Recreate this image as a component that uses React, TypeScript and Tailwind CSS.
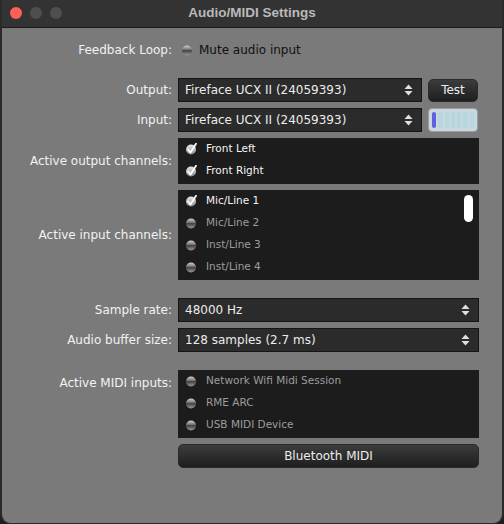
import React from 'react';

const font = { fontFamily: '"DejaVu Sans", "Liberation Sans", sans-serif' };

const Toggle: React.FC<{ on?: boolean; size?: number }> = ({ on, size = 12 }) => (
  <svg width={size} height={size} viewBox="0 0 12 12" className="shrink-0">
    <defs>
      <linearGradient id="ball" x1="0" y1="0" x2="0" y2="1">
        <stop offset="0" stopColor="#d0d0d0" />
        <stop offset="0.45" stopColor="#6a6a6a" />
        <stop offset="0.55" stopColor="#4a4a4a" />
        <stop offset="1" stopColor="#9a9a9a" />
      </linearGradient>
      <linearGradient id="ballOn" x1="0" y1="0" x2="0" y2="1">
        <stop offset="0" stopColor="#e8e8e8" />
        <stop offset="1" stopColor="#8a8a8a" />
      </linearGradient>
    </defs>
    <circle cx="6" cy="6.5" r="5" fill={on ? 'url(#ballOn)' : 'url(#ball)'} />
    {!on && <path d="M1.5 6.5h9" stroke="#3a3a3a" strokeWidth="0.6" />}
    {on && <path d="M3 6.5l2.5 3L11 0.8" fill="none" stroke="#ffffff" strokeWidth="1.8" strokeLinecap="round" strokeLinejoin="round" />}
  </svg>
);

const Arrows = () => (
  <svg width="9" height="12" viewBox="0 0 9 12" className="shrink-0">
    <path d="M4.5 0.5L8.5 5H0.5z" fill="#e0e0e0" />
    <path d="M4.5 11.5L8.5 7H0.5z" fill="#e0e0e0" />
  </svg>
);

const Combo: React.FC<{ value: string; className?: string }> = ({ value, className = '' }) => (
  <div className={`h-6 flex items-center justify-between pl-[6px] pr-[8px] bg-[#2b2b2b] border border-[#151515] text-[12px] text-[#ececec] ${className}`}>
    <span>{value}</span>
    <Arrows />
  </div>
);

const Label: React.FC<{ children: React.ReactNode }> = ({ children }) => (
  <div className="w-[176px] shrink-0 pr-[6px] text-right text-[12px] text-[#f2f2f2]">{children}</div>
);

const Item: React.FC<{ on?: boolean; text: string }> = ({ on, text }) => (
  <div className="h-[22px] flex items-center gap-[9px] pl-[7px]">
    <Toggle on={on} />
    <span className={`text-[10.5px] ${on ? 'text-[#f4f4f4]' : 'text-[#9c9c9c]'}`}>{text}</span>
  </div>
);

export default function App() {
  return (
    <div className="w-[504px] h-[524px] bg-[#1e1e1e]" style={font}>
      <div className="w-full h-full rounded-b-[10px] overflow-hidden bg-[#7a7a7a] border-x-2 border-b border-[#2a2a2a] flex flex-col">
        <div className="h-[28px] shrink-0 bg-[#333333] border-b border-[#1a1a1a] relative flex items-center justify-center">
          <div className="absolute left-[8px] top-[7px] flex gap-[8px]">
            <div className="w-3 h-3 rounded-full bg-[#fe5f57]" />
            <div className="w-3 h-3 rounded-full bg-[#4e4e4e]" />
            <div className="w-3 h-3 rounded-full bg-[#4e4e4e]" />
          </div>
          <span className="text-[13.5px] font-bold text-[#b9b9b9]" style={{ fontFamily: '"Liberation Sans", Arial, sans-serif' }}>
            Audio/MIDI Settings
          </span>
        </div>

        <div className="flex flex-col pt-[10px] pr-[23px]">
          <div className="flex items-center h-6">
            <Label>Feedback Loop:</Label>
            <div className="flex items-center gap-[6px] pl-[3px]">
              <Toggle />
              <span className="text-[12px] text-[#111]">Mute audio input</span>
            </div>
          </div>

          <div className="flex items-center mt-[16px]">
            <Label>Output:</Label>
            <Combo value="Fireface UCX II (24059393)" className="w-[244px]" />
            <div className="ml-[6px] w-[50px] h-[23px] rounded-[5px] bg-gradient-to-b from-[#3c3c3c] to-[#1f1f1f] border border-[#2a2a2a] flex items-center justify-center text-[12px] text-[#ececec]">
              Test
            </div>
          </div>

          <div className="flex items-center mt-[6px]">
            <Label>Input:</Label>
            <Combo value="Fireface UCX II (24059393)" className="w-[244px]" />
            <div className="ml-[6px] w-[50px] h-[24px] rounded-[4px] bg-[#c9d8dc] border border-[#9c9c9c] flex items-center gap-[2px] px-[3px] py-[3px]">
              <div className="flex-1 h-full rounded-full bg-[#6060e0]" />
              {[0, 1, 2, 3, 4, 5].map((i) => (
                <div key={i} className="flex-1 h-full rounded-full bg-[#b6d7df]" />
              ))}
            </div>
          </div>

          <div className="flex items-center mt-[6px]">
            <Label>Active output channels:</Label>
            <div className="flex-1 h-[46px] bg-[#1c1c1c] flex flex-col">
              <Item on text="Front Left" />
              <Item on text="Front Right" />
            </div>
          </div>

          <div className="flex items-center mt-[6px]">
            <Label>Active input channels:</Label>
            <div className="flex-1 h-[90px] bg-[#1c1c1c] flex flex-col relative">
              <Item on text="Mic/Line 1" />
              <Item text="Mic/Line 2" />
              <Item text="Inst/Line 3" />
              <Item text="Inst/Line 4" />
              <div className="absolute right-[6px] top-[5px] w-[9px] h-[27px] rounded-full bg-white" />
            </div>
          </div>

          <div className="flex items-center mt-[18px]">
            <Label>Sample rate:</Label>
            <Combo value="48000 Hz" className="flex-1" />
          </div>

          <div className="flex items-center mt-[6px]">
            <Label>Audio buffer size:</Label>
            <Combo value="128 samples (2.7 ms)" className="flex-1" />
          </div>

          <div className="flex items-start mt-[18px]">
            <div className="pt-[4px]">
              <Label>Active MIDI inputs:</Label>
            </div>
            <div className="flex-1 flex flex-col gap-[6px]">
              <div className="h-[68px] bg-[#1c1c1c] flex flex-col">
                <Item text="Network Wifi Midi Session" />
                <Item text="RME ARC" />
                <Item text="USB MIDI Device" />
              </div>
              <div className="h-6 rounded-[5px] bg-gradient-to-b from-[#3c3c3c] to-[#1f1f1f] border border-[#2a2a2a] flex items-center justify-center text-[12px] text-[#ececec]">
                Bluetooth MIDI
              </div>
            </div>
          </div>
        </div>
      </div>
    </div>
  );
}
